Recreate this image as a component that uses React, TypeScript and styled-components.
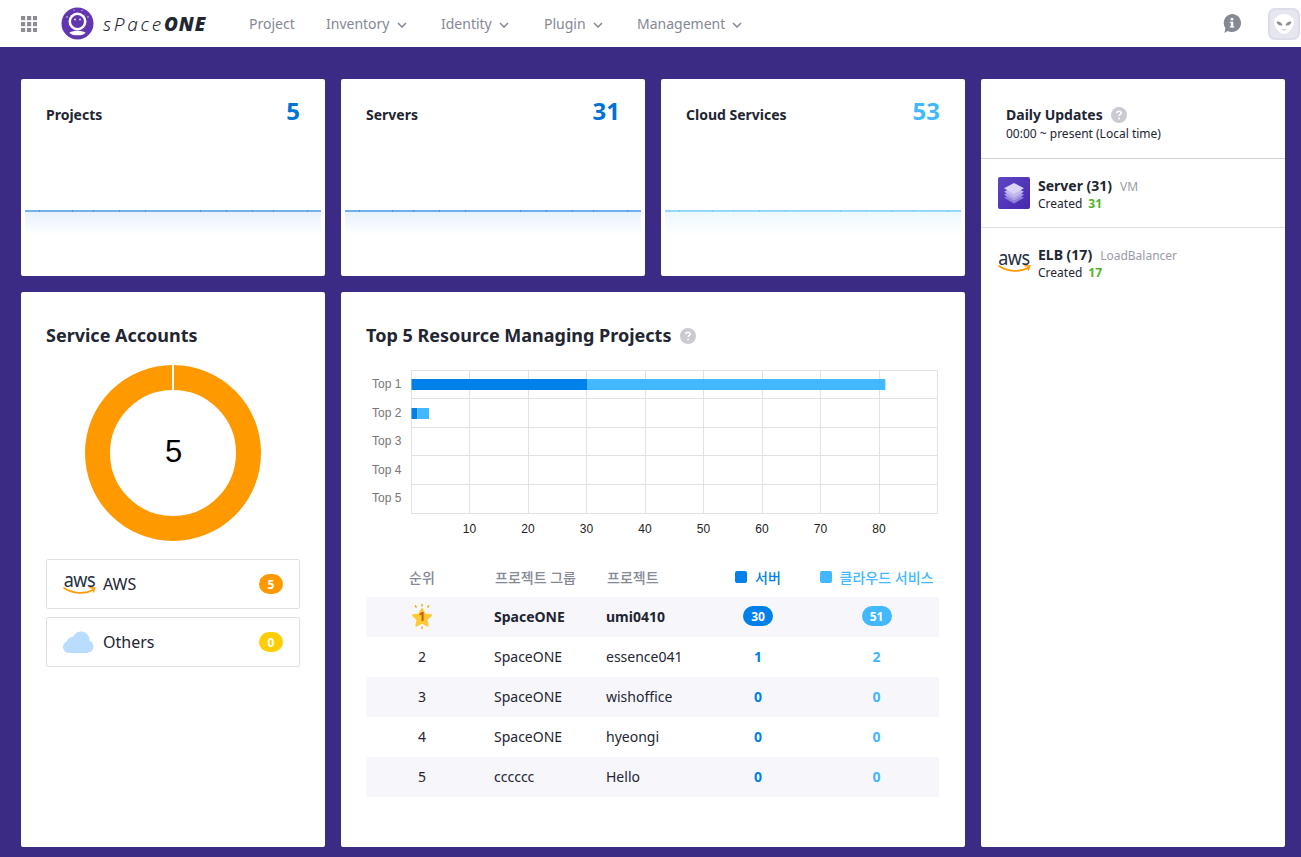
import React from "react";
import styled, { createGlobalStyle } from "styled-components";

const FONT = `"Noto Sans", "Noto Sans CJK KR", sans-serif`;
const BLUE = "#0080e8";
const SKY = "#41b8ff";

const Global = createGlobalStyle`
  html, body { margin: 0; padding: 0; background: #3c2b84; }
  body { font-family: ${FONT}; color: #222532; width: 1301px; height: 857px; overflow: hidden; }
  * { box-sizing: border-box; }
`;

const Page = styled.div`
  width: 1301px;
  height: 857px;
  display: flex;
  flex-direction: column;
`;
const TopBar = styled.header`
  height: 47px;
  flex: none;
  background: #fff;
  display: flex;
  align-items: center;
  padding-left: 21px;
  padding-right: 1px;
`;
const Logo = styled.div`
  display: flex;
  align-items: center;
  margin-left: 24px;
  width: 188px;
`;
const LogoText = styled.span`
  font-family: "Noto Sans", sans-serif;
  font-style: italic;
  font-size: 19px;
  font-weight: 300;
  letter-spacing: 2.7px;
  color: #222532;
  margin-left: 9px;
  line-height: 1;
  margin-top: 1px;
  white-space: nowrap;
`;
const LogoStrong = styled.b`
  font-weight: 900;
  letter-spacing: 0.9px;
`;
const Nav = styled.nav`
  display: flex;
  align-items: center;
  flex: 1;
`;
const NavItem = styled.div<{ $w: number }>`
  width: ${(p) => p.$w}px;
  display: flex;
  align-items: center;
  font-size: 14px;
  color: #858895;
  white-space: nowrap;
`;
const HeadRight = styled.div`
  display: flex;
  align-items: center;
`;
const Avatar = styled.div`
  width: 32px;
  height: 32px;
  border-radius: 7px;
  background: #e6e6f0;
  border: 2px solid #dcdde8;
  margin-left: 27px;
  display: flex;
  align-items: center;
  justify-content: center;
`;
const Main = styled.main`
  flex: 1;
  padding: 32px 16px 0 21px;
  display: grid;
  grid-template-columns: repeat(4, 304px);
  grid-template-rows: 197px 555px;
  gap: 16px;
`;
const Card = styled.section`
  background: #fff;
  border-radius: 2px;
  min-width: 0;
`;
const StatCard = styled(Card)`
  display: flex;
  flex-direction: column;
  padding: 15px 4px 40px;
`;
const StatHead = styled.div`
  display: flex;
  justify-content: space-between;
  padding: 0 21px;
`;
const StatTitle = styled.div`
  font-size: 14px;
  font-weight: 700;
  line-height: 20px;
  margin-top: 11px;
`;
const StatValue = styled.div<{ $c: string }>`
  font-size: 24px;
  font-weight: 700;
  line-height: 33px;
  color: ${(p) => p.$c};
`;
const SparkBox = styled.div`
  margin-top: auto;
  height: 26px;
  line-height: 0;
`;
const Side = styled(Card)`
  grid-column: 4;
  grid-row: 1 / span 2;
`;
const SideHead = styled.div`
  height: 80px;
  padding: 26px 25px 0;
  border-bottom: 1px solid #cfd0d9;
`;
const SideTitle = styled.div`
  display: flex;
  align-items: center;
  gap: 8px;
  font-size: 14px;
  font-weight: 700;
  line-height: 20px;
`;
const SideSub = styled.div`
  font-size: 12px;
  line-height: 16px;
  margin-top: 1px;
`;
const Update = styled.div<{ $last?: boolean }>`
  height: 69px;
  padding: 18px 17px 0;
  display: flex;
  gap: 8px;
  border-bottom: ${(p) => (p.$last ? "none" : "1px solid #dcdde3")};
`;
const UpdateIcon = styled.div`
  width: 32px;
  height: 32px;
  flex: none;
`;
const UpdateName = styled.div`
  font-size: 14px;
  font-weight: 700;
  line-height: 17px;
  display: flex;
  align-items: baseline;
  gap: 8px;
`;
const UpdateKind = styled.span`
  font-size: 12px;
  font-weight: 400;
  color: #9a9ca8;
`;
const UpdateLine = styled.div`
  font-size: 12px;
  line-height: 17px;
  display: flex;
  gap: 6px;
`;
const Created = styled.span`
  color: #4fb32a;
  font-weight: 700;
`;
const AccountCard = styled(Card)`
  padding: 31px 25px 0;
`;
const H2 = styled.h2`
  margin: 0;
  font-size: 18px;
  font-weight: 700;
  line-height: 25px;
  display: flex;
  align-items: center;
  gap: 9px;
`;
const Donut = styled.div`
  display: flex;
  justify-content: center;
  margin-top: 17px;
  height: 176px;
`;
const Providers = styled.div`
  margin-top: 18px;
  display: flex;
  flex-direction: column;
  gap: 8px;
`;
const Provider = styled.div`
  height: 50px;
  border: 1px solid #dfe0e6;
  border-radius: 2px;
  display: flex;
  align-items: center;
  padding: 0 16px;
  font-size: 16px;
  color: #222532;
`;
const ProviderIcon = styled.div`
  width: 33px;
  height: 32px;
  margin-right: 7px;
  flex: none;
`;
const ProviderName = styled.span`
  flex: 1;
`;
const Count = styled.span<{ $c: string }>`
  width: 24px;
  height: 20px;
  border-radius: 10px;
  background: ${(p) => p.$c};
  color: #fff;
  font-size: 12px;
  font-weight: 700;
  display: flex;
  align-items: center;
  justify-content: center;
`;
const TopCard = styled(Card)`
  grid-column: 2 / span 2;
  padding: 31px 25px 0;
`;
const ChartWrap = styled.div`
  margin-top: 21px;
  height: 180px;
  line-height: 0;
`;
const Table = styled.div`
  margin-top: 8px;
  width: 573px;
`;
const Row = styled.div<{ $shade?: boolean; $bold?: boolean }>`
  display: grid;
  grid-template-columns: 112px 112px 112px 112px 125px;
  height: 40px;
  padding-bottom: 2px;
  align-items: center;
  font-size: 14px;
  font-weight: ${(p) => (p.$bold ? 700 : 400)};
  background: ${(p) => (p.$shade ? "#f7f7fb" : "transparent")};
  color: #222532;
`;
const HeadRow = styled(Row)`
  padding-bottom: 0;
  color: #858895;
  font-weight: 500;
`;
const Center = styled.div`
  display: flex;
  justify-content: center;
  align-items: center;
`;
const Left = styled.div`
  padding-left: 16px;
  white-space: nowrap;
`;
const HeadLeft = styled(Left)`
  padding-left: 17px;
`;
const LegendCell = styled(Center)<{ $c: string }>`
  color: ${(p) => p.$c};
  gap: 8px;
  white-space: nowrap;
`;
const Square = styled.i<{ $c: string }>`
  width: 12px;
  height: 12px;
  border-radius: 2px;
  background: ${(p) => p.$c};
`;
const Pill = styled.span<{ $c: string }>`
  min-width: 30px;
  height: 20px;
  padding: 0 6px;
  border-radius: 10px;
  background: ${(p) => p.$c};
  color: #fff;
  font-size: 12px;
  font-weight: 700;
  display: flex;
  align-items: center;
  justify-content: center;
`;
const Num = styled.span<{ $c: string }>`
  color: ${(p) => p.$c};
  font-weight: 700;
  font-size: 14px;
`;
const AwsWrap = styled.div`
  position: relative;
  width: 100%;
  height: 100%;
`;
const AwsWord = styled.span`
  position: absolute;
  left: 0;
  right: 0;
  top: 1px;
  text-align: center;
  font-family: "Noto Sans", sans-serif;
  font-size: 18px;
  line-height: 1;
  letter-spacing: -0.4px;
  color: #232f3e;
  transform: scaleY(1.1);
  transform-origin: top;
`;
const AwsSmile = styled.svg`
  position: absolute;
  left: 0;
  top: 19px;
`;

const Help = () => (
  <svg width="16" height="16" viewBox="0 0 16 16">
    <circle cx="8" cy="8" r="8" fill="#c9cad2" />
    <path d="M5.9 6.2c0-1.2 1-1.9 2.1-1.9s2.1.7 2.1 1.8c0 1.6-2 1.5-2 3" fill="none" stroke="#fff" strokeWidth="1.6" />
    <circle cx="8.1" cy="11.6" r="1" fill="#fff" />
  </svg>
);
const Chevron = () => (
  <svg width="10" height="6" viewBox="0 0 10 6" style={{ marginLeft: 7, marginTop: 2 }}>
    <path d="M1 1l4 4 4-4" fill="none" stroke="#858895" strokeWidth="1.5" />
  </svg>
);
const Grid9 = () => (
  <svg width="16" height="16" viewBox="0 0 16 16" fill="#8b8c94">
    {[0, 6, 12].flatMap((y) =>
      [0, 6, 12].map((x) => <rect key={`${x}-${y}`} x={x} y={y} width="4.2" height="4.2" />)
    )}
  </svg>
);
const Astronaut = () => (
  <svg width="33" height="33" viewBox="0 0 33 33">
    <circle cx="16.5" cy="16.5" r="16" fill="#6236ae" />
    <circle cx="16.5" cy="14.5" r="9" fill="#fff" />
    <circle cx="16.5" cy="14.5" r="6.5" fill="#6236ae" />
    <circle cx="14" cy="12.500" r="1" fill="#e0d6f4" />
    <circle cx="19" cy="12.500" r="1" fill="#e0d6f4" />
    <path d="M8.500 25.500c4.500-2.200 11.500-2.200 16 0-1.800 3.800-14.200 3.800-16 0z" fill="#fff" />
    <circle cx="6" cy="10" r=".7" fill="#fff" />
    <circle cx="27" cy="10" r=".7" fill="#fff" />
    <circle cx="13" cy="3" r=".6" fill="#fff" />
    <circle cx="21" cy="3.500" r=".6" fill="#fff" />
  </svg>
);
const InfoBubble = () => (
  <svg width="18" height="19" viewBox="0 0 18 19">
    <path d="M9 0a9 9 0 1 1-4.300 16.900L1.500 19l.8-5A9 9 0 0 1 9 0z" fill="#858895" />
    <rect x="7.800" y="7.800" width="2.500" height="5.500" fill="#fff" />
    <rect x="6.800" y="7.800" width="2" height="1.200" fill="#fff" />
    <rect x="6.800" y="12.300" width="4.500" height="1.200" fill="#fff" />
    <circle cx="9" cy="5.200" r="1.400" fill="#fff" />
  </svg>
);
const Alien = () => (
  <svg width="24" height="24" viewBox="0 0 24 24">
    <path d="M12 2c6 0 10 3.600 10 8.500C22 15.500 16 22 12 22S2 15.500 2 10.500C2 5.600 6 2 12 2z" fill="#fff" />
    <path d="M4.500 9.500c2.800-.3 5.400 1 6 4-3.200.4-5.600-1.200-6-4zM19.500 9.500c-2.800-.3-5.400 1-6 4 3.200.4 5.600-1.200 6-4z" fill="#8a8b96" />
    <path d="M10.300 17.500c1 .5 2.400.5 3.400 0" stroke="#a5a6b0" strokeWidth=".8" fill="none" />
  </svg>
);
const Cube = () => (
  <svg width="32" height="32" viewBox="0 0 32 32">
    <defs>
      <linearGradient id="cubeBg" x1="0" y1="0" x2="1" y2="1">
        <stop offset="0" stopColor="#5f46c4" />
        <stop offset="1" stopColor="#4527ae" />
      </linearGradient>
    </defs>
    <rect width="32" height="32" rx="2" fill="url(#cubeBg)" />
    <path d="M16 15.500l10 5.300-10 5.700-10-5.700z" fill="#8f7fd8" />
    <path d="M16 12.500l10 5.300-10 5.700-10-5.700z" fill="#ad9fe4" />
    <path d="M16 9.500l10 5.300-10 5.700-10-5.700z" fill="#c3b8ec" />
    <path d="M16 6l10 5.300-10 5.700-10-5.700z" fill="#d9d3f5" />
  </svg>
);
const Aws = () => (
  <AwsWrap>
    <AwsWord>aws</AwsWord>
    <AwsSmile width="33" height="9" viewBox="0 0 33 9">
      <path d="M1 1c9 6 21 6.500 29.500 1.500" fill="none" stroke="#f90" strokeWidth="1.600" strokeLinecap="round" />
      <path d="M27 .8l4.800.2-1.500 4" fill="none" stroke="#f90" strokeWidth="1.400" strokeLinecap="round" />
    </AwsSmile>
  </AwsWrap>
);
const Cloud = () => (
  <svg width="31" height="32" viewBox="0 0 31 32" fill="#b9dcff">
    <circle cx="18" cy="14" r="8.500" />
    <circle cx="9.500" cy="17" r="6" />
    <circle cx="24.500" cy="20.500" r="6" />
    <circle cx="6" cy="21" r="6" />
    <rect x="6" y="19" width="19" height="8" />
  </svg>
);
const Star = () => (
  <svg width="22" height="25" viewBox="0 0 22 25">
    <path d="M11 5l2.800 5.400 6.200.9-4.500 4.200 1.100 6-5.600-2.900-5.600 2.900 1.100-6L2 11.300l6.200-.9z" fill="#ffc933" stroke="#ffc933" strokeWidth="2" strokeLinejoin="round" />
    <path d="M11 22.500V25M4 1.500l1.500 2M18 1.500l-1.500 2" stroke="#f5a200" strokeWidth="1.300" />
    <path d="M11 0v2.500" stroke="#f5a200" strokeWidth="1.300" />
    <text x="11" y="16.500" textAnchor="middle" fontFamily="Noto Sans" fontSize="12" fontWeight="700" fill="#c9580a">1</text>
  </svg>
);

const Spark = ({ id, line, tick, fill }: { id: string; line: string; tick: string; fill: string }) => (
  <svg width="296" height="26" viewBox="0 0 296 26">
    <defs>
      <linearGradient id={id} x1="0" y1="0" x2="0" y2="1">
        <stop offset="0" stopColor={fill} />
        <stop offset="1" stopColor="#fff" />
      </linearGradient>
    </defs>
    <rect y="2" width="296" height="24" fill={`url(#${id})`} />
    <rect width="296" height="2" fill={line} />
    {[14, 47, 68, 94, 120, 175, 201, 227, 248, 282].map((x) => (
      <rect key={x} x={x} width="1" height="2" fill={tick} />
    ))}
  </svg>
);

const X0 = 45;
const TOP = 1;
const UNIT = 5.85;
const RH = 28.5;
const crisp = (v: number) => Math.floor(v) + 0.5;
const Chart = () => {
  const rows = [0, 1, 2, 3, 4];
  const ticks = [10, 20, 30, 40, 50, 60, 70, 80];
  const bars: [number, number][] = [[30, 51], [1, 2]];
  return (
    <svg width="580" height="180" viewBox="0 0 580 180">
      <rect x={45.5} y={1.5} width={526} height={143} fill="#fff" stroke="#e2e2e4" />
      {rows.map((i) => (
        <line key={i} x1={45.5} x2={571.5} y1={crisp(TOP + RH * i)} y2={crisp(TOP + RH * i)} stroke="#e2e2e4" />
      ))}
      {ticks.map((t) => (
        <line key={t} x1={crisp(X0 + t * UNIT)} x2={crisp(X0 + t * UNIT)} y1={1.5} y2={144.5} stroke="#e2e2e4" />
      ))}
      {bars.map(([a, b], i) => (
        <g key={i}>
          <rect x={X0 + 0.5} y={10 + Math.round(RH * i)} width={a * UNIT} height={11} fill="#0080e8" />
          <rect x={X0 + 0.5 + a * UNIT} y={10 + Math.round(RH * i)} width={b * UNIT} height={11} fill="#41b8ff" />
        </g>
      ))}
      {rows.map((i) => (
        <text key={i} x={6} y={19 + RH * i} fontFamily="Liberation Sans" fontSize="12" fill="#777">
          Top {i + 1}
        </text>
      ))}
      {ticks.map((t) => (
        <text key={t} x={X0 + t * UNIT} y={164} textAnchor="middle" fontFamily="Liberation Sans" fontSize="12" fill="#222">
          {t}
        </text>
      ))}
    </svg>
  );
};

const projects = [
  { g: "SpaceONE", p: "essence041", s: 1, c: 2 },
  { g: "SpaceONE", p: "wishoffice", s: 0, c: 0 },
  { g: "SpaceONE", p: "hyeongi", s: 0, c: 0 },
  { g: "cccccc", p: "Hello", s: 0, c: 0 },
];

export default function App() {
  return (
    <Page>
      <Global />
      <TopBar>
        <Grid9 />
        <Logo>
          <Astronaut />
          <LogoText>
            sPace<LogoStrong>ONE</LogoStrong>
          </LogoText>
        </Logo>
        <Nav>
          <NavItem $w={77}>Project</NavItem>
          <NavItem $w={115}>Inventory<Chevron /></NavItem>
          <NavItem $w={103}>Identity<Chevron /></NavItem>
          <NavItem $w={93}>Plugin<Chevron /></NavItem>
          <NavItem $w={120}>Management<Chevron /></NavItem>
        </Nav>
        <HeadRight>
          <InfoBubble />
          <Avatar><Alien /></Avatar>
        </HeadRight>
      </TopBar>
      <Main>
        <StatCard>
          <StatHead>
            <StatTitle>Projects</StatTitle>
            <StatValue $c="#0072d6">5</StatValue>
          </StatHead>
          <SparkBox><Spark id="s1" line="#78b2ea" tick="#4a94dc" fill="#e8f2fc" /></SparkBox>
        </StatCard>
        <StatCard>
          <StatHead>
            <StatTitle>Servers</StatTitle>
            <StatValue $c="#0072d6">31</StatValue>
          </StatHead>
          <SparkBox><Spark id="s2" line="#6fb0ee" tick="#4a94dc" fill="#e8f2fc" /></SparkBox>
        </StatCard>
        <StatCard>
          <StatHead>
            <StatTitle>Cloud Services</StatTitle>
            <StatValue $c={SKY}>53</StatValue>
          </StatHead>
          <SparkBox><Spark id="s3" line="#98d8fb" tick="#7cccf8" fill="#ecf8ff" /></SparkBox>
        </StatCard>
        <Side>
          <SideHead>
            <SideTitle>Daily Updates <Help /></SideTitle>
            <SideSub>00:00 ~ present (Local time)</SideSub>
          </SideHead>
          <Update>
            <UpdateIcon><Cube /></UpdateIcon>
            <div>
              <UpdateName>Server (31) <UpdateKind>VM</UpdateKind></UpdateName>
              <UpdateLine>Created <Created>31</Created></UpdateLine>
            </div>
          </Update>
          <Update $last>
            <UpdateIcon><Aws /></UpdateIcon>
            <div>
              <UpdateName>ELB (17) <UpdateKind>LoadBalancer</UpdateKind></UpdateName>
              <UpdateLine>Created <Created>17</Created></UpdateLine>
            </div>
          </Update>
        </Side>
        <AccountCard>
          <H2>Service Accounts</H2>
          <Donut>
            <svg width="176" height="176" viewBox="0 0 176 176">
              <circle cx="88" cy="88" r="75.500" fill="none" stroke="#ff9900" strokeWidth="25" />
              <rect x="87" y="0" width="2" height="25" fill="#fff" />
              <text x="88.500" y="96.500" textAnchor="middle" fontFamily="Liberation Sans" fontSize="31" fill="#000">5</text>
            </svg>
          </Donut>
          <Providers>
            <Provider>
              <ProviderIcon><Aws /></ProviderIcon>
              <ProviderName>AWS</ProviderName>
              <Count $c="#ff9900">5</Count>
            </Provider>
            <Provider>
              <ProviderIcon><Cloud /></ProviderIcon>
              <ProviderName>Others</ProviderName>
              <Count $c="#ffce02">0</Count>
            </Provider>
          </Providers>
        </AccountCard>
        <TopCard>
          <H2>Top 5 Resource Managing Projects <Help /></H2>
          <ChartWrap>
            <Chart />
          </ChartWrap>
          <Table>
            <HeadRow>
              <Center>순위</Center>
              <HeadLeft>프로젝트 그룹</HeadLeft>
              <HeadLeft>프로젝트</HeadLeft>
              <LegendCell $c={BLUE}><Square $c={BLUE} />서버</LegendCell>
              <LegendCell $c={SKY}><Square $c={SKY} />클라우드 서비스</LegendCell>
            </HeadRow>
            <Row $shade $bold>
              <Center><Star /></Center>
              <Left>SpaceONE</Left>
              <Left>umi0410</Left>
              <Center><Pill $c={BLUE}>30</Pill></Center>
              <Center><Pill $c={SKY}>51</Pill></Center>
            </Row>
            {projects.map((r, i) => (
              <Row key={r.p} $shade={i % 2 === 1}>
                <Center>{i + 2}</Center>
                <Left>{r.g}</Left>
                <Left>{r.p}</Left>
                <Center><Num $c={BLUE}>{r.s}</Num></Center>
                <Center><Num $c={SKY}>{r.c}</Num></Center>
              </Row>
            ))}
          </Table>
        </TopCard>
      </Main>
    </Page>
  );
}
